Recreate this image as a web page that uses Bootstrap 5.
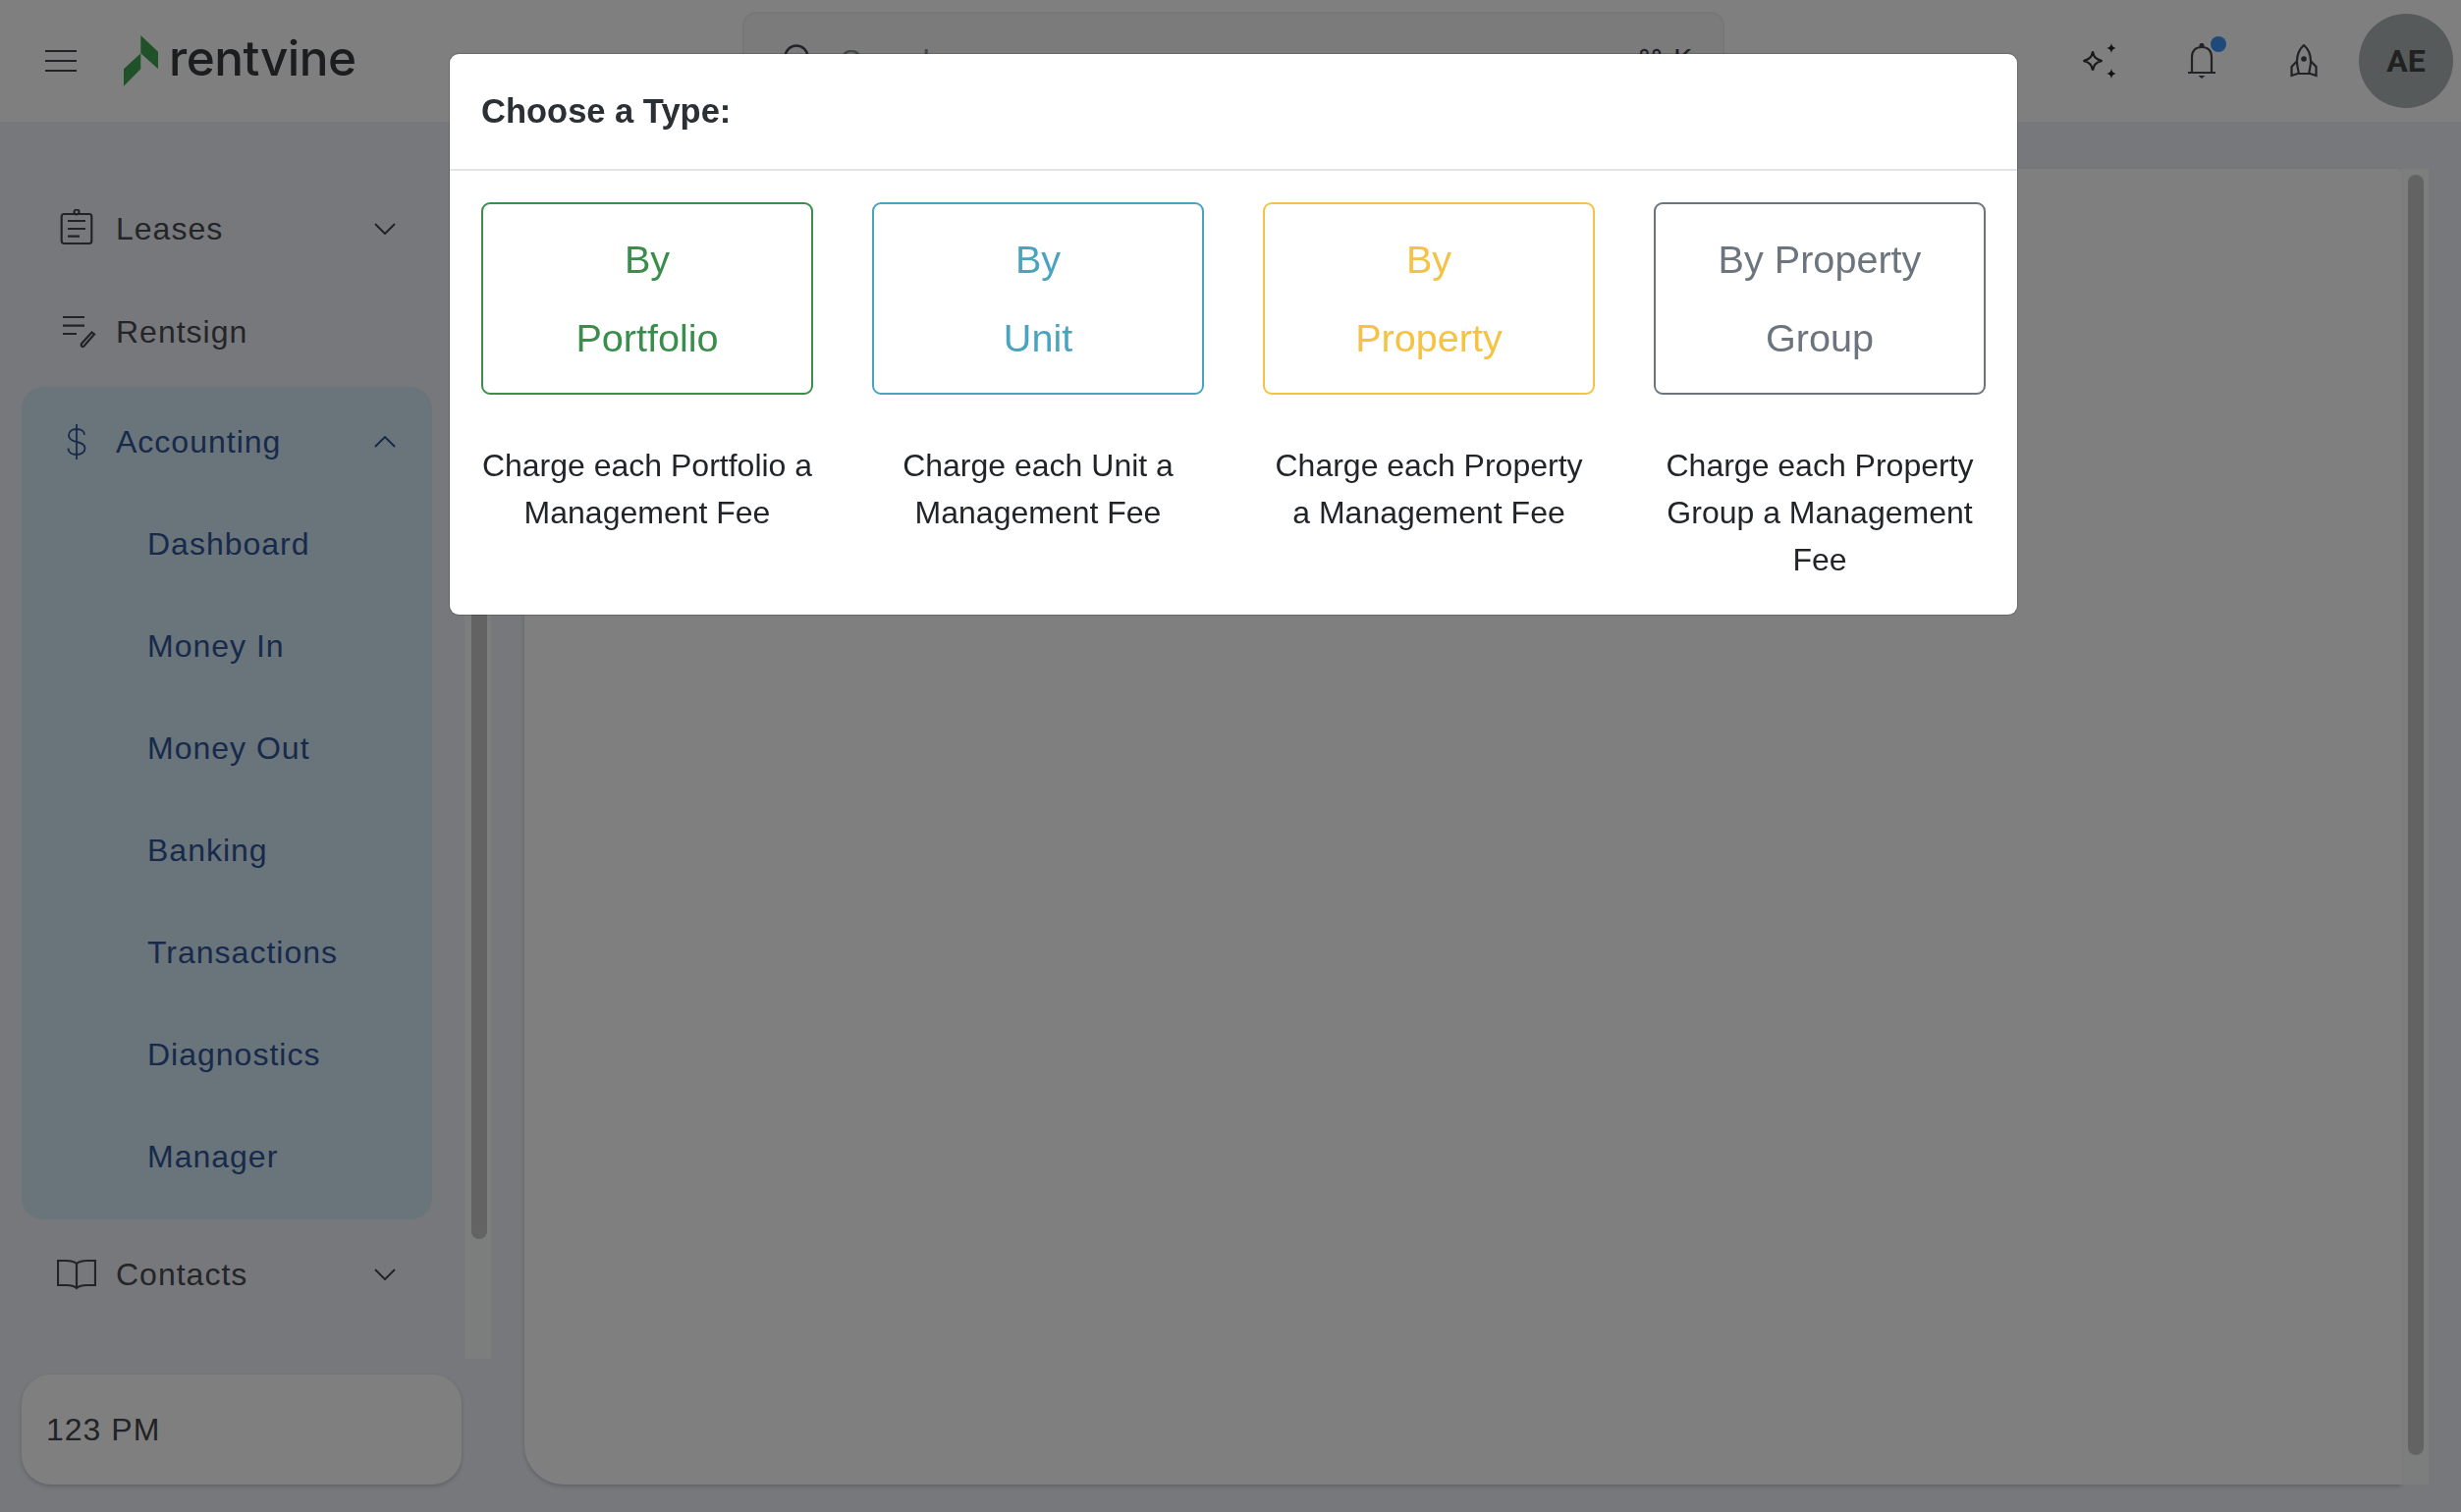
<!DOCTYPE html>
<html lang="en">
<head>
    <title>Rentvine - Choose a Type</title>
    <meta charset="UTF-8">
    <meta name="viewport" content="width=device-width, initial-scale=1.0">
    <link href="https://cdn.jsdelivr.net/npm/bootstrap@5.3.0/dist/css/bootstrap.min.css" rel="stylesheet">
    <style>
        html, body { height: 100%; overflow: hidden; }
        body { font-family: "Liberation Sans", Arial, sans-serif; background: #eef1f6; color: #44474c; }
        .app-top { height: 124px; background: #fff; padding: 0 8px 0 46px; }
        .burger { width: 32px; height: 22px; color: #44474c; }
        .brand { width: 237px; margin-left: 48px; }
        .brand svg { flex: none; }
        .brand-name { font-family: Inter, sans-serif; font-weight: 500; font-size: 49.500px; line-height: 1; color: #383a3e; margin: -4px 0 0 11px; letter-spacing: -0.5px; }
        .search-box { width: 1000px; height: 100px; margin-left: 393px; padding: 0 32px 0 40px; background: #f6f7f9; border: 2px solid #eceef0; border-radius: 14px; font-size: 32px; color: #8a8f96; }
        .search-keys { color: #44474c; font-family: "DejaVu Sans", sans-serif; font-size: 28px; }
        .top-icons { padding-right: 42px; }
        .bell-wrap { position: relative; width: 28px; height: 36px; margin: 0 76px 0 72px; }
        .bell-dot { position: absolute; top: -7px; left: 23px; width: 16px; height: 16px; border-radius: 50%; background: #3e93f6; }
        .avatar-circle { width: 96px; height: 96px; border-radius: 50%; background: #acb4b4; color: #424244; font-family: Roboto, sans-serif; font-weight: 700; font-size: 32px; }
        .app-body { height: 1416px; }
        .side-col { width: 534px; padding: 48px 0 28px 22px; }
        .side-nav { height: 1212px; overflow: hidden; }
        .side-list { width: 418px; padding-top: 9px; }
        .side-track { width: 27px; margin-left: 33px; background: #f9fafb; padding: 0 4px 0 7px; }
        .side-thumb { height: 1090px; background: #c6c6c6; border-radius: 0 0 8px 8px; }
        .nav-row { height: 104px; padding: 0 37px 0 36px; font-size: 32px; letter-spacing: 1px; color: #484b50; }
        .nav-row svg.lead-ico { width: 40px; height: 40px; margin-right: 20px; flex: none; }
        .nav-row svg.chev { width: 22px; height: 12px; margin-left: auto; }
        .nav-sub { padding-left: 128px; color: #2f5596; }
        .open-group { margin: 4px 0; padding: 4px 0 12px; background: #d5e8f7; border-radius: 22px; }
        .open-group .nav-row { color: #2f5596; }
        .gap-one { margin-bottom: 1px; }
        .pm-card { height: 112px; margin-top: 16px; width: 448px; padding-left: 25px; background: #fff; border-radius: 30px; font-size: 32px; letter-spacing: 1px; color: #44474c; box-shadow: 0 2px 4px rgba(70, 90, 130, .3); }
        .main-col { padding: 48px 33px 28px 0; }
        .main-panel { background: #fff; border-radius: 40px 4px 0 40px; box-shadow: 0 2px 4px rgba(70, 90, 130, .3); }
        .main-track { width: 28px; background: #f9fafb; padding: 6px 5px 30px 7px; }
        .main-thumb { height: 100%; background: #c6c6c6; border-radius: 8px; }
        .type-dialog { max-width: 1598px; width: 1598px; margin: 54px 0 0 457px; }
        .type-dialog .modal-content { border-radius: 10px; }
        .type-head { height: 119px; padding: 0 32px; border-bottom: 2px solid #e2e3e4; }
        .type-head h5 { margin: 0; font-size: 34.500px; font-weight: 700; color: #2b3035; }
        .type-grid { display: grid; grid-template-columns: repeat(4, 338px); gap: 60px; padding: 32px; }
        .type-btn { width: 100%; height: 196px; padding: 16px; border-width: 2px; border-radius: 9px; font-size: 39.600px; line-height: 80px; --bs-btn-bg: #fff; }
        .type-btn span { display: block; }
        .type-green { --bs-btn-color: #388e4a; --bs-btn-border-color: #388e4a; }
        .type-cyan { --bs-btn-color: #4aa3bf; --bs-btn-border-color: #4aa3bf; }
        .type-yellow { --bs-btn-color: #f6c244; --bs-btn-border-color: #f6c244; }
        .type-gray { --bs-btn-color: #6c757d; --bs-btn-border-color: #6c757d; }
        .type-note { margin: 48px 0 0; font-size: 32px; line-height: 48px; text-align: center; color: #212529; }
    </style>
</head>
<body>
    <!-- top bar -->
    <div class="app-top d-flex align-items-center">
        <svg class="burger" viewBox="0 0 32 22" fill="none" stroke="currentColor" stroke-width="2"><path d="M0 1h32M0 11h32M0 21h32"/></svg>
        <div class="brand d-flex align-items-center">
            <svg width="35" height="52" viewBox="0 0 35 52"><path fill="#3ea450" d="M17.3 0 35 16.7V34.300L17.300 18.300zM17.300 18.300V34.300L0 51.700V34.300z"/></svg>
            <span class="brand-name">rentvine</span>
        </div>
        <div class="search-box d-flex align-items-center">
            <svg width="34" height="34" viewBox="0 0 34 34" fill="none" stroke="#44474c" stroke-width="2.500" class="me-4"><circle cx="13" cy="13" r="11.500"/><path d="m22 22 10 10"/></svg>
            <span>Search</span>
            <span class="search-keys ms-auto">⌘ K</span>
        </div>
        <div class="top-icons ms-auto d-flex align-items-center">
            <svg width="36" height="36" viewBox="0 0 36 36"><path fill="none" stroke="#333" stroke-width="2.200" d="M11 8.500c1 5 2.500 8 9.500 9.500-7 1.500-8.500 4.500-9.500 9.500C10 22.500 8.500 19.500 1.500 18 8.500 16.500 10 13.500 11 8.500z"/><path fill="#222" d="M30 0c.7 3 1.500 4.300 5 5-3.500.7-4.300 2-5 5-.7-3-1.500-4.300-5-5 3.500-.7 4.300-2 5-5zM30 26c.7 3 1.500 4.300 5 5-3.500.7-4.300 2-5 5-.7-3-1.500-4.300-5-5 3.500-.7 4.300-2 5-5z"/></svg>
            <div class="bell-wrap">
                <svg width="28" height="36" viewBox="0 0 28 36" fill="none" stroke="#44474c" stroke-width="2.200"><path d="M4 30V14C4 7.500 8 4 14 4s10 3.500 10 10v16M0 30h28"/><circle cx="14" cy="2.500" r="1.500" fill="#44474c"/><path fill="#44474c" stroke="none" d="M10.500 33h7l-3.500 3z"/></svg>
                <span class="bell-dot"></span>
            </div>
            <svg width="28" height="34" viewBox="0 0 28 34" fill="none" stroke="#44474c" stroke-width="2.200"><path d="M14 1c-4.500 4-7 10-7 16 0 4 .8 8 2 13h10c1.200-5 2-9 2-13 0-6-2.500-12-7-16z"/><path d="M7.300 17 1.500 23v9l7.500-2.500M20.700 17l5.800 6v9L19 29.500"/><circle cx="14" cy="15" r="2.800" fill="#44474c" stroke="none"/></svg>
        </div>
        <div class="avatar-circle d-flex align-items-center justify-content-center">AE</div>
    </div>

    <div class="app-body d-flex">
        <!-- sidebar -->
        <div class="side-col flex-shrink-0 d-flex flex-column">
            <div class="side-nav d-flex">
                <div class="side-list">
                    <div class="nav-row gap-one d-flex align-items-center">
                        <svg class="lead-ico" viewBox="0 0 40 40" fill="none" stroke="#44474c" stroke-width="2.200"><rect x="4.700" y="5" width="30.600" height="30" rx="2.500"/><circle cx="20" cy="3" r="2.500"/><path d="M11 12h18M11 20h18M11 27.700h12"/></svg>
                        <span>Leases</span>
                        <svg class="chev" viewBox="0 0 22 12" fill="none" stroke="#44474c" stroke-width="2"><path d="m1 1 10 10L21 1"/></svg>
                    </div>
                    <div class="nav-row d-flex align-items-center">
                        <svg class="lead-ico" viewBox="0 0 40 40" fill="none" stroke="#44474c" stroke-width="2.200"><path d="M6 5h22M6 13.700h22M6 22h14"/><path d="M25 32 35.500 20.500l2.500 2L27.500 34.500c-1 1-3.500.5-2.500-2.500z"/></svg>
                        <span>Rentsign</span>
                    </div>
                    <div class="open-group">
                        <div class="nav-row d-flex align-items-center">
                            <svg class="lead-ico" viewBox="0 0 40 40" fill="none" stroke="#2f5596" stroke-width="1.800"><path d="M28 13c0-4-3.500-6-8-6s-8 2.500-8 6.500 3.500 5.500 8 6.500 8.500 2.500 8.500 6.500-4 6.500-8.500 6.500-8.500-2-8.500-6.500M20 2v36"/></svg>
                            <span>Accounting</span>
                            <svg class="chev" viewBox="0 0 22 12" fill="none" stroke="#2f5596" stroke-width="2"><path d="m1 11 10-10 10 10"/></svg>
                        </div>
                        <div class="nav-row nav-sub d-flex align-items-center">Dashboard</div>
                        <div class="nav-row nav-sub d-flex align-items-center">Money In</div>
                        <div class="nav-row nav-sub d-flex align-items-center">Money Out</div>
                        <div class="nav-row nav-sub d-flex align-items-center">Banking</div>
                        <div class="nav-row nav-sub d-flex align-items-center">Transactions</div>
                        <div class="nav-row nav-sub d-flex align-items-center">Diagnostics</div>
                        <div class="nav-row nav-sub d-flex align-items-center">Manager</div>
                    </div>
                    <div class="nav-row d-flex align-items-center">
                        <svg class="lead-ico" viewBox="0 0 40 40" fill="none" stroke="#44474c" stroke-width="2.200"><path d="M20 9c-3-2.500-7-3-11-3H1v25h9c4 0 7 .5 10 3 3-2.500 6-3 10-3h9V6h-8c-4 0-8 .5-11 3zM20 9v25"/></svg>
                        <span>Contacts</span>
                        <svg class="chev" viewBox="0 0 22 12" fill="none" stroke="#44474c" stroke-width="2"><path d="m1 1 10 10L21 1"/></svg>
                    </div>
                </div>
                <div class="side-track"><div class="side-thumb"></div></div>
            </div>
            <div class="pm-card d-flex align-items-center">123 PM</div>
        </div>
        <!-- main content -->
        <div class="main-col flex-grow-1 d-flex">
            <div class="main-panel flex-grow-1"></div>
            <div class="main-track"><div class="main-thumb"></div></div>
        </div>
    </div>

    <div class="modal-backdrop show"></div>
    <div class="modal d-block" tabindex="-1">
        <div class="modal-dialog type-dialog">
            <div class="modal-content">
                <div class="type-head d-flex align-items-center">
                    <h5>Choose a Type:</h5>
                </div>
                <div class="type-grid">
                    <div>
                        <button type="button" class="btn type-btn type-green"><span>By</span><span>Portfolio</span></button>
                        <p class="type-note">Charge each Portfolio a Management Fee</p>
                    </div>
                    <div>
                        <button type="button" class="btn type-btn type-cyan"><span>By</span><span>Unit</span></button>
                        <p class="type-note">Charge each Unit a Management Fee</p>
                    </div>
                    <div>
                        <button type="button" class="btn type-btn type-yellow"><span>By</span><span>Property</span></button>
                        <p class="type-note">Charge each Property a Management Fee</p>
                    </div>
                    <div>
                        <button type="button" class="btn type-btn type-gray"><span>By Property</span><span>Group</span></button>
                        <p class="type-note">Charge each Property Group a Management Fee</p>
                    </div>
                </div>
            </div>
        </div>
    </div>

    <script src="https://cdn.jsdelivr.net/npm/bootstrap@5.3.0/dist/js/bootstrap.bundle.min.js"></script>
</body>
</html>
